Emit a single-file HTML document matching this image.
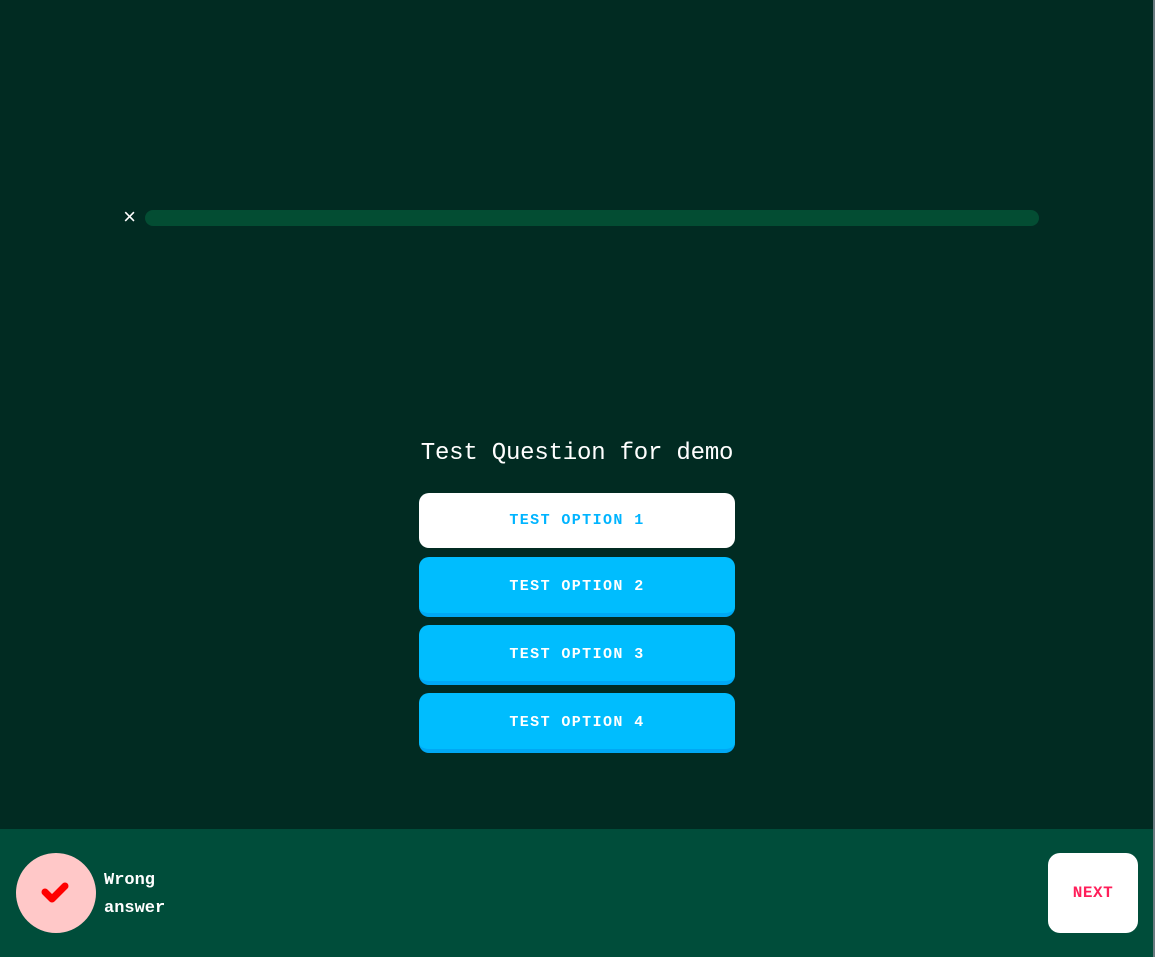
<!DOCTYPE html>
<html><head><meta charset="utf-8"><style>
*{margin:0;padding:0;box-sizing:border-box}
html,body{width:1155px;height:957px;overflow:hidden;background:#012b22;font-family:"Liberation Mono",monospace}
.edge{position:absolute;right:0;top:0;width:2px;height:957px;background:#6a7a80}
.x{position:absolute;left:123px;top:207px;color:#fff;font-size:22px;line-height:24px}
.bar{position:absolute;left:145px;top:210px;width:894px;height:16px;border-radius:8px;background:#034d33}
.q{position:absolute;left:419px;top:438px;width:316px;text-align:center;color:#fff;font-size:24px;line-height:32px;white-space:nowrap;letter-spacing:-0.2px}
.opt{position:absolute;left:419px;width:316px;border-radius:10px;display:flex;align-items:center;justify-content:center;font-weight:bold;font-size:15px;letter-spacing:1.4px}
.w{top:493px;height:55px;background:#fff;color:#00b4ff}
.b{height:60px;background:#00bdfe;color:#fff;border-bottom:4px solid #00a8f4;padding-top:2px}
.bottom{position:absolute;left:0;top:829px;width:1153px;height:128px;background:#004d3a}
.circ{position:absolute;left:16px;top:24px;width:80px;height:80px;border-radius:50%;background:#ffc8c8}
.msg{position:absolute;left:104px;top:38px;color:#fff;font-weight:bold;font-size:17px;line-height:28px}
.next{position:absolute;left:1048px;top:24px;width:90px;height:80px;background:#fff;border-radius:12px;display:flex;align-items:center;justify-content:center;color:#ff1f5a;font-weight:bold;font-size:16px;letter-spacing:0.5px}
</style></head><body>
<div class="x">×</div>
<div class="bar"></div>
<div class="q">Test Question for demo</div>
<div class="opt w">TEST OPTION 1</div>
<div class="opt b" style="top:557px">TEST OPTION 2</div>
<div class="opt b" style="top:625px">TEST OPTION 3</div>
<div class="opt b" style="top:693px">TEST OPTION 4</div>
<div class="bottom">
<div class="circ"><svg width="80" height="80" viewBox="0 0 80 80"><path d="M29 39 L36 46 L49 33" fill="none" stroke="#ff0000" stroke-width="7" stroke-linecap="round" stroke-linejoin="round"/></svg></div>
<div class="msg">Wrong<br>answer</div>
<div class="next">NEXT</div>
</div>
<div class="edge"></div>
</body></html>
